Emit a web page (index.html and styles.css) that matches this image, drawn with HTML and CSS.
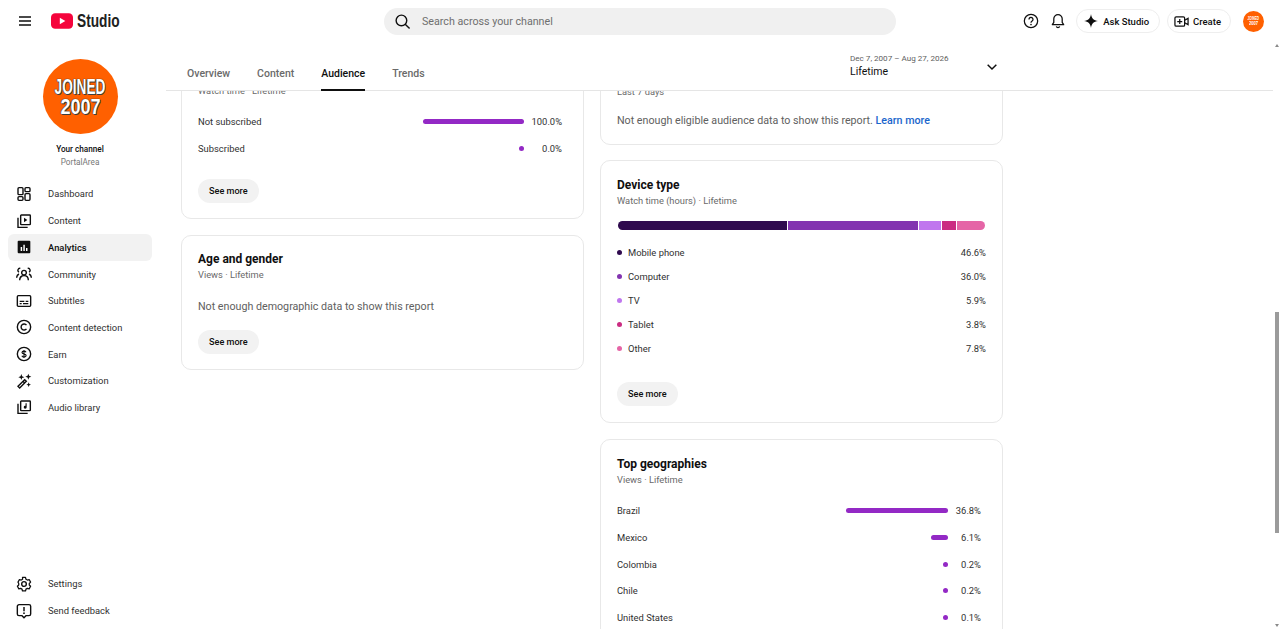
FILE: index.html
```html
<!DOCTYPE html>
<html lang="en">
<head>
    <meta charset="UTF-8">
    <title>Channel analytics - YouTube Studio</title>
    <link rel="stylesheet" href="styles.css">
</head>
<body>
    <!-- Top bar -->
    <header class="topbar">
        <div class="topbar-left">
            <svg class="icon menu-icon" viewBox="0 0 24 24"><path d="M3 6h18M3 12h18M3 18h18" fill="none" stroke="#0f0f0f" stroke-width="2"/></svg>
            <div class="logo">
                <svg class="logo-mark" viewBox="0 0 24 17"><rect width="24" height="17" rx="4.5" fill="#f5043c"/><path d="M9.6 5v7l6-3.5z" fill="#fff"/></svg>
                <span class="logo-text">Studio</span>
            </div>
        </div>
        <div class="search">
            <svg class="icon search-icon" viewBox="0 0 24 24"><circle cx="10.5" cy="10.5" r="7.5" fill="none" stroke="#0f0f0f" stroke-width="2"/><path d="M15.8 15.8 22 22" stroke="#0f0f0f" stroke-width="2"/></svg>
            <span>Search across your channel</span>
        </div>
        <div class="topbar-right">
            <svg class="icon" viewBox="0 0 24 24"><circle cx="12" cy="12" r="10" fill="none" stroke="#0f0f0f" stroke-width="1.9"/><path d="M9 9.600a3 3 0 1 1 4.700 2.400c-1.100.8-1.700 1.300-1.700 2.600" fill="none" stroke="#0f0f0f" stroke-width="1.900"/><circle cx="12" cy="17.400" r="1.200" fill="#0f0f0f"/></svg>
            <svg class="icon bell" viewBox="0 0 24 24"><path d="M12 2.500a6.300 6.300 0 0 0-6.300 6.300v5.400l-2.200 3.300h17l-2.200-3.300V8.800A6.300 6.300 0 0 0 12 2.500z" fill="none" stroke="#0f0f0f" stroke-width="1.900" stroke-linejoin="round"/><path d="M9.500 20a2.600 2.600 0 0 0 5 0" fill="none" stroke="#0f0f0f" stroke-width="1.900"/></svg>
            <div class="pill-btn ask">
                <svg class="pill-icon" viewBox="0 0 24 24"><path d="M12 0c.9 7.200 4.800 11.100 12 12-7.200.9-11.100 4.800-12 12-.9-7.200-4.800-11.100-12-12 7.200-.9 11.100-4.800 12-12z" fill="#0f0f0f"/></svg>
                <span>Ask Studio</span>
            </div>
            <div class="pill-btn create">
                <svg class="pill-icon create-icon" viewBox="0 0 24 24"><rect x="1.500" y="4.500" width="15.500" height="15" rx="2" fill="none" stroke="#0f0f0f" stroke-width="2"/><path d="M9.200 8v8M5.200 12h8" stroke="#0f0f0f" stroke-width="2"/><path d="m17 10 5.500-3v10L17 14" fill="none" stroke="#0f0f0f" stroke-width="2"/></svg>
                <span>Create</span>
            </div>
            <div class="avatar-small"><span class="line-joined">JOINED</span><span class="line-year">2007</span></div>
        </div>
    </header>

    <div class="page">
        <!-- Sidebar -->
        <aside class="sidebar">
            <div class="channel">
                <div class="avatar-big"><span class="line-joined">JOINED</span><span class="line-year">2007</span></div>
                <div class="channel-title">Your channel</div>
                <div class="channel-name">PortalArea</div>
            </div>
            <nav class="nav">
                <a class="nav-item"><svg class="icon" viewBox="0 0 24 24"><g fill="none" stroke="#0f0f0f" stroke-width="2.100"><rect x="3" y="2.500" width="7.500" height="10.500" rx="1.500"/><rect x="13.500" y="2.500" width="7.500" height="6" rx="1.500"/><rect x="3" y="16" width="7.500" height="5.500" rx="1.500"/><rect x="13.500" y="11.500" width="7.500" height="10" rx="1.500"/></g></svg>Dashboard</a>
                <a class="nav-item"><svg class="icon" viewBox="0 0 24 24"><g fill="none" stroke="#0f0f0f" stroke-width="2.100"><rect x="7" y="3" width="14.500" height="14.500" rx="1"/><path d="M3 7v14.500h14.500"/></g><path d="M12 7.300v6.500l5-3.250z" fill="#0f0f0f"/></svg>Content</a>
                <a class="nav-item active"><svg class="icon" viewBox="0 0 24 24"><rect x="2.500" y="2.500" width="19" height="19" rx="1.500" fill="#0f0f0f"/><path d="M7 12h2.200v6H7zM11 8.500h2.200V18H11zM15 13.500h2.200V18H15z" fill="#fff"/></svg>Analytics</a>
                <a class="nav-item"><svg class="icon" viewBox="0 0 24 24"><g fill="none" stroke="#0f0f0f" stroke-width="2.100"><circle cx="12" cy="10" r="3.500"/><path d="M5.500 21.500c0-4.300 2.800-7 6.500-7s6.500 2.700 6.500 7"/><path d="M6.500 3.500a3 3 0 0 0-2 5.600M17.500 3.500a3 3 0 0 1 2 5.600M1 17.500c0-2.900 1.200-4.600 3.500-5.500M23 17.500c0-2.900-1.200-4.600-3.500-5.500"/></g></svg>Community</a>
                <a class="nav-item"><svg class="icon" viewBox="0 0 24 24"><rect x="2" y="4" width="20" height="16" rx="1.500" fill="none" stroke="#0f0f0f" stroke-width="2.100"/><path d="M5.500 12.500h7M14.500 12.500h4M5.500 16h3M10.500 16h8" stroke="#0f0f0f" stroke-width="1.700"/></svg>Subtitles</a>
                <a class="nav-item"><svg class="icon" viewBox="0 0 24 24"><circle cx="12" cy="12" r="10" fill="none" stroke="#0f0f0f" stroke-width="2.100"/><path d="M15.700 9.200a4.500 4.500 0 1 0 0 5.600" fill="none" stroke="#0f0f0f" stroke-width="2.100"/></svg>Content detection</a>
                <a class="nav-item"><svg class="icon" viewBox="0 0 24 24"><circle cx="12" cy="12" r="10" fill="none" stroke="#0f0f0f" stroke-width="2.100"/><path d="M15 9.300c-.5-1-1.500-1.600-3-1.600-1.700 0-3 .8-3 2.200 0 3 6.200 1.400 6.200 4.300 0 1.400-1.400 2.200-3.200 2.200-1.500 0-2.700-.7-3.200-1.800M12 6v12" fill="none" stroke="#0f0f0f" stroke-width="1.700"/></svg>Earn</a>
                <a class="nav-item"><svg class="icon" viewBox="0 0 24 24"><path d="m3 20 10-10 2.500 2.500-10 10z" fill="none" stroke="#0f0f0f" stroke-width="2.100"/><path d="m10.500 12.500 2.500 2.500" stroke="#0f0f0f" stroke-width="2.100"/><path d="M8 1.500 9.200 5l3.300 1.200L9.200 7.400 8 10.500 6.800 7.400 3.500 6.200 6.800 5zM18.500 1 19.700 4.300 23 5.500 19.700 6.700 18.500 10 17.300 6.700 14 5.500 17.300 4.300zM19 14l1 2.500 2.500 1-2.500 1-1 2.500-1-2.500-2.500-1 2.500-1z" fill="#0f0f0f"/></svg>Customization</a>
                <a class="nav-item"><svg class="icon" viewBox="0 0 24 24"><g fill="none" stroke="#0f0f0f" stroke-width="2.100"><rect x="7" y="3" width="14.500" height="14.500" rx="1"/><path d="M3 7v14.500h14.500"/></g><path d="M16 6.500v5.800a2.200 2.200 0 1 1-1.700-2.100V6.500z" fill="#0f0f0f"/></svg>Audio library</a>
            </nav>
            <div class="nav bottom-nav">
                <a class="nav-item"><svg class="icon" viewBox="0 0 24 24"><g fill="none" stroke="#0f0f0f" stroke-width="2.100" stroke-linejoin="round"><path d="M9.500 2h5l.8 3 2.300 1.300 3-.8 2.400 4.300-2.200 2.200v2.600l2.200 2.100-2.400 4.300-3-.8-2.300 1.300-.8 3h-5l-.8-3-2.300-1.300-3 .8-2.400-4.300 2.200-2.100v-2.600L2 9.800l2.400-4.300 3 .8 2.300-1.300z" transform="translate(1.200 .4) scale(.9)"/><circle cx="12" cy="12" r="3.500"/></g></svg>Settings</a>
                <a class="nav-item"><svg class="icon" viewBox="0 0 24 24"><path d="M4.500 2.500h15A2.500 2.500 0 0 1 22 5v11.500a2.500 2.500 0 0 1-2.500 2.500H15l-3 3-3-3H4.500A2.500 2.500 0 0 1 2 16.500V5a2.500 2.500 0 0 1 2.500-2.500z" fill="none" stroke="#0f0f0f" stroke-width="2.100"/><path d="M12 6v6.500" stroke="#0f0f0f" stroke-width="2.200"/><circle cx="12" cy="15.300" r="1.300" fill="#0f0f0f"/></svg>Send feedback</a>
            </div>
        </aside>

        <main class="main">
            <div class="tabbar">
                <div class="tabs">
                    <div class="tab">Overview</div>
                    <div class="tab">Content</div>
                    <div class="tab selected">Audience</div>
                    <div class="tab">Trends</div>
                </div>
                <div class="range">
                    <div class="range-text">
                        <div class="range-dates">Dec 7, 2007 – Aug 27, 2026</div>
                        <div class="range-name">Lifetime</div>
                    </div>
                    <svg class="icon chevron" viewBox="0 0 24 24"><path d="m5.500 8.500 6.500 6.500 6.500-6.500" fill="none" stroke="#0f0f0f" stroke-width="2.200"/></svg>
                </div>
            </div>

            <div class="scroller">
                <div class="columns">
                    <div class="column">
                        <section class="card card-subs">
                            <div class="card-sub">Watch time · Lifetime</div>
                            <div class="bar-rows">
                                <div class="bar-row"><span class="bar-label">Not subscribed</span><span class="bar-track"><i class="bar-fill" style="width: 101px"></i></span><span class="bar-value">100.0%</span></div>
                                <div class="bar-row"><span class="bar-label">Subscribed</span><span class="bar-track"><i class="bar-fill" style="width: 5px"></i></span><span class="bar-value">0.0%</span></div>
                            </div>
                            <div class="see-more">See more</div>
                        </section>
                        <section class="card card-age">
                            <h3>Age and gender</h3>
                            <div class="card-sub">Views · Lifetime</div>
                            <p class="empty">Not enough demographic data to show this report</p>
                            <div class="see-more">See more</div>
                        </section>
                    </div>
                    <div class="column">
                        <section class="card card-eligible">
                            <div class="card-sub">Last 7 days</div>
                            <p class="empty">Not enough eligible audience data to show this report. <a class="learn">Learn more</a></p>
                        </section>
                        <section class="card card-device">
                            <h3>Device type</h3>
                            <div class="card-sub">Watch time (hours) · Lifetime</div>
                            <div class="stack">
                                <i class="c1" style="width: 46%"></i><i class="c2" style="width: 35.4%"></i><i class="c3" style="width: 6%"></i><i class="c4" style="width: 3.8%"></i><i class="c5" style="width: 7.7%"></i>
                            </div>
                            <div class="legend">
                                <div class="legend-row"><b class="dot c1"></b><span>Mobile phone</span><em>46.6%</em></div>
                                <div class="legend-row"><b class="dot c2"></b><span>Computer</span><em>36.0%</em></div>
                                <div class="legend-row"><b class="dot c3"></b><span>TV</span><em>5.9%</em></div>
                                <div class="legend-row"><b class="dot c4"></b><span>Tablet</span><em>3.8%</em></div>
                                <div class="legend-row"><b class="dot c5"></b><span>Other</span><em>7.8%</em></div>
                            </div>
                            <div class="see-more device-more">See more</div>
                        </section>
                        <section class="card">
                            <h3>Top geographies</h3>
                            <div class="card-sub">Views · Lifetime</div>
                            <div class="bar-rows geo-rows">
                                <div class="bar-row"><span class="bar-label">Brazil</span><span class="bar-track"><i class="bar-fill" style="width: 102px"></i></span><span class="bar-value">36.8%</span></div>
                                <div class="bar-row"><span class="bar-label">Mexico</span><span class="bar-track"><i class="bar-fill" style="width: 17px"></i></span><span class="bar-value">6.1%</span></div>
                                <div class="bar-row"><span class="bar-label">Colombia</span><span class="bar-track"><i class="bar-fill" style="width: 5px"></i></span><span class="bar-value">0.2%</span></div>
                                <div class="bar-row"><span class="bar-label">Chile</span><span class="bar-track"><i class="bar-fill" style="width: 5px"></i></span><span class="bar-value">0.2%</span></div>
                                <div class="bar-row"><span class="bar-label">United States</span><span class="bar-track"><i class="bar-fill" style="width: 5px"></i></span><span class="bar-value">0.1%</span></div>
                            </div>
                        </section>
                    </div>
                </div>
            </div>
        </main>

        <!-- Scrollbar -->
        <div class="scrollbar">
            <span class="arrow up"></span>
            <span class="thumb"></span>
            <span class="arrow down"></span>
        </div>
    </div>
</body>
</html>
```
FILE: styles.css
```css
html, body {
    height: 100%;
    margin: 0;
    overflow: hidden;
}

body {
    display: flex;
    flex-direction: column;
    background-color: #fff;
    color: #0f0f0f;
    font-family: Roboto, "Liberation Sans", sans-serif;
    font-size: 9.4px;
}

.icon {
    width: 16px;
    height: 16px;
    flex: none;
}

/* Top bar */
.topbar {
    height: 42px;
    flex: none;
    display: flex;
    align-items: center;
    position: relative;
    padding: 0 16px 0 17px;
}

.topbar-left {
    display: flex;
    align-items: center;
    gap: 18px;
}

.logo {
    display: flex;
    align-items: center;
    gap: 4px;
}

.logo-mark {
    width: 22px;
    height: 16px;
}

.logo-text {
    font-family: "Liberation Sans", sans-serif;
    font-size: 18.5px;
    font-weight: 700;
    color: #212121;
    transform: scaleX(.74);
    transform-origin: left center;
}

.search {
    position: absolute;
    left: 384px;
    top: 8px;
    width: 512px;
    height: 27px;
    box-sizing: border-box;
    padding: 0 10px;
    border-radius: 14px;
    background-color: #f0f0f0;
    display: flex;
    align-items: center;
    gap: 11px;
    font-size: 10.7px;
    color: #6f6f6f;
}

.search-icon {
    width: 17px;
    height: 17px;
}

.topbar-right {
    margin-left: auto;
    display: flex;
    align-items: center;
}

.bell {
    margin-left: 11px;
}

.pill-btn {
    height: 24px;
    box-sizing: border-box;
    border: 1px solid #eee;
    border-radius: 12px;
    display: flex;
    align-items: center;
    font-size: 9.5px;
    font-weight: 500;
}

.pill-icon {
    width: 14px;
    height: 14px;
}

.create-icon {
    width: 15px;
    height: 15px;
}

.ask {
    margin-left: 10px;
    padding: 0 10px 0 7px;
    gap: 5px;
}

.create {
    margin-left: 7px;
    padding: 0 9px 0 6px;
    gap: 4px;
}

/* JOINED 2007 avatar picture, as text */
.avatar-small, .avatar-big {
    border-radius: 50%;
    background-color: #ff6000;
    color: #fff;
    display: flex;
    flex-direction: column;
    align-items: center;
    justify-content: center;
    font-family: "Liberation Sans", sans-serif;
    font-weight: 700;
    overflow: hidden;
}

.line-joined {
    transform: scaleX(.62);
}

.line-year {
    transform: scaleX(.82);
}

.avatar-small {
    width: 21px;
    height: 21px;
    margin-left: 12px;
    font-size: 5px;
    line-height: 5.5px;
}

/* Layout */
.page {
    flex: 1;
    display: flex;
    min-height: 0;
    position: relative;
}

.sidebar {
    width: 166px;
    flex: none;
    display: flex;
    flex-direction: column;
    box-sizing: border-box;
    padding: 0 14px 5px 8px;
}

.channel {
    display: flex;
    flex-direction: column;
    align-items: center;
    padding: 17px 0 11.6px;
}

.avatar-big {
    width: 75px;
    height: 75px;
    margin-bottom: 9px;
    font-size: 22px;
    line-height: 19.5px;
    text-shadow: 0 0 1px #222, 0 0 1px #222, 1px 1px 0 #444;
}

.channel-title {
    font-size: 8.2px;
    font-weight: 500;
    line-height: 13px;
}

.channel-name {
    font-size: 8.2px;
    line-height: 13px;
    color: #777;
}

.nav-item {
    height: 26.7px;
    display: flex;
    align-items: center;
    gap: 16px;
    padding-left: 8px;
    border-radius: 6px;
    color: #303030;
}

.nav-item.active {
    background-color: #f2f2f2;
    font-weight: 500;
    color: #0f0f0f;
}

.bottom-nav {
    margin-top: auto;
}

/* Main column */
.main {
    flex: 1;
    min-width: 0;
    display: flex;
    flex-direction: column;
    padding-right: 7px;
}

.tabbar {
    height: 49px;
    flex: none;
    box-sizing: border-box;
    border-bottom: 1px solid #e5e5e5;
    display: flex;
    justify-content: space-between;
    padding-left: 21px;
    padding-right: 273px;
    position: relative;
    z-index: 1;
    background-color: #fff;
}

.tabs {
    display: flex;
    gap: 27px;
    align-self: flex-end;
}

.tab {
    height: 34px;
    box-sizing: border-box;
    border-bottom: 2px solid transparent;
    margin-bottom: -1px;
    padding-top: 10px;
    font-size: 10.5px;
    font-weight: 500;
    color: #6a6a6a;
}

.tab.selected {
    border-bottom-color: #0f0f0f;
    color: #0f0f0f;
}

.range {
    display: flex;
    align-items: center;
    width: 150px;
    justify-content: space-between;
    padding-top: 2px;
}

.range-text {
    margin-bottom: 2px;
}

.range-dates {
    font-size: 8.1px;
    line-height: 11px;
    color: #606060;
}

.range-name {
    font-size: 10.5px;
    line-height: 15px;
}

.scroller {
    flex: 1;
    min-height: 0;
    overflow: hidden;
}

/* Cards */
.columns {
    display: flex;
    gap: 16px;
    padding-left: 15px;
    align-items: flex-start;
}

.column {
    width: 403px;
    display: flex;
    flex-direction: column;
    gap: 16px;
}

.card {
    box-sizing: border-box;
    border: 1px solid #e8e8e8;
    border-radius: 10px;
    padding: 15px 16px;
}

.card h3 {
    margin: 0;
    font-size: 12px;
    font-weight: 700;
    line-height: 18px;
}

.card-sub {
    font-size: 9.3px;
    line-height: 14px;
    color: #6a6a6a;
}

.card-subs {
    margin-top: -18px;
    height: 146px;
    padding-top: 10px;
}

.card-subs .see-more {
    margin-top: 18px;
}

.card-age {
    padding-top: 14px;
}

.card-age .empty {
    margin-top: 17px;
}

.card-age .see-more {
    margin-top: 16px;
}

.card-eligible {
    height: 72px;
    margin-top: -18px;
    margin-bottom: -1px;
    padding-top: 11px;
}

.card-eligible .empty {
    margin-top: 14px;
}

.card-device {
    padding-bottom: 16px;
}

.bar-rows {
    margin-top: 10px;
    padding-right: 5px;
}

.bar-row {
    height: 26.7px;
    display: flex;
    align-items: center;
}

.bar-label {
    width: 170px;
    color: #303030;
}

.bar-track {
    flex: 1;
    display: flex;
    justify-content: flex-end;
}

.bar-fill {
    display: block;
    height: 5px;
    border-radius: 3px;
    background-color: #9329c5;
}

.bar-value {
    width: 38px;
    text-align: right;
    color: #303030;
}

.geo-rows {
    margin-top: 10.5px;
}

.geo-rows .bar-value {
    width: 33px;
}

.see-more {
    display: inline-block;
    margin-top: 17px;
    padding: 0 11px;
    height: 24px;
    line-height: 24px;
    border-radius: 12px;
    background-color: #f2f2f2;
    font-size: 9.1px;
    font-weight: 500;
}

.empty {
    margin: 16px 0 0;
    font-size: 10.7px;
    line-height: 15px;
    color: #606060;
}

.learn {
    color: #1a66cc;
    font-weight: 500;
}

.stack {
    display: flex;
    gap: 1px;
    height: 9px;
    margin: 13px 1px 0;
    border-radius: 5px;
    overflow: hidden;
}

.stack i {
    display: block;
}

.legend {
    margin-top: 10px;
}

.legend-row {
    height: 24px;
    display: flex;
    align-items: center;
    color: #303030;
}

.legend-row em {
    margin-left: auto;
    font-style: normal;
}

.dot {
    width: 5px;
    height: 5px;
    border-radius: 50%;
    margin-right: 6px;
}

.c1 { background-color: #2f0a4e; }
.c2 { background-color: #8334b0; }
.c3 { background-color: #c077ee; }
.c4 { background-color: #cb2c82; }
.c5 { background-color: #e565a6; }

.device-more {
    margin-top: 22px;
}

/* Scrollbar */
.scrollbar {
    position: absolute;
    right: 1px;
    top: 0;
    bottom: 0;
    width: 4px;
}

.thumb {
    position: absolute;
    right: 0;
    top: 270px;
    width: 4px;
    height: 221px;
    background-color: #9b9b9b;
}

.arrow {
    position: absolute;
    right: 0;
    width: 0;
    height: 0;
    border-left: 2px solid transparent;
    border-right: 2px solid transparent;
}

.arrow.up {
    top: 2px;
    border-bottom: 3px solid #8a8a8a;
}

.arrow.down {
    bottom: 2px;
    border-top: 3px solid #8a8a8a;
}
```
